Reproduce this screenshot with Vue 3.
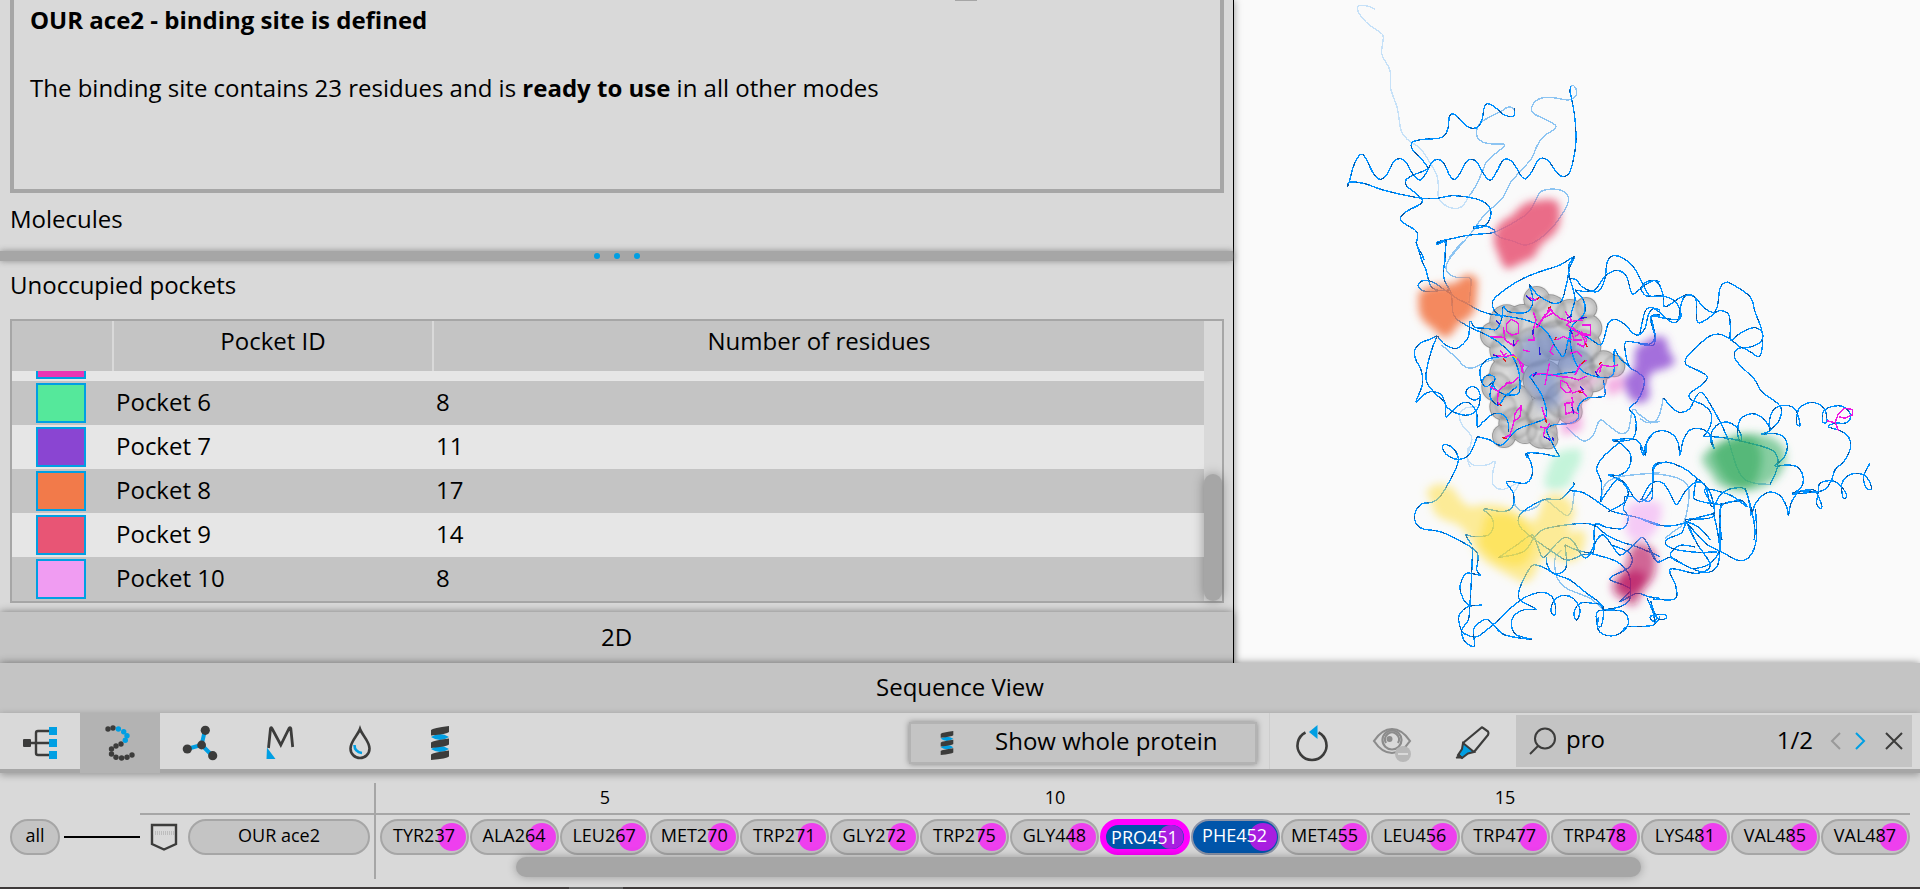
<script setup>
import { ref } from 'vue'

const pockets = [
  { name: 'Pocket 6', residues: 8, tone: 'mint' },
  { name: 'Pocket 7', residues: 11, tone: 'violet' },
  { name: 'Pocket 8', residues: 17, tone: 'orange' },
  { name: 'Pocket 9', residues: 14, tone: 'rose' },
  { name: 'Pocket 10', residues: 8, tone: 'lilac' },
]

const residues = [
  'TYR237', 'ALA264', 'LEU267', 'MET270', 'TRP271', 'GLY272', 'TRP275', 'GLY448', 'PRO451',
  'PHE452', 'MET455', 'LEU456', 'TRP477', 'TRP478', 'LYS481', 'VAL485', 'VAL487',
]
const ticks = residues.map((_, i) => ((i + 3) % 5 === 0 ? i + 3 : ''))
const query = ref('pro')

// Smooth curve through a list of "x,y" points
function curve(text) {
  const p = text.trim().split(/\s+/).map((s) => s.split(',').map(Number))
  let d = `M${p[0][0]} ${p[0][1]}`
  for (let i = 0; i < p.length - 1; i++) {
    const a = p[i - 1] || p[i]
    const b = p[i]
    const c = p[i + 1]
    const e = p[i + 2] || c
    const n = [
      b[0] + (c[0] - a[0]) / 6, b[1] + (c[1] - a[1]) / 6,
      c[0] - (e[0] - b[0]) / 6, c[1] - (e[1] - b[1]) / 6, c[0], c[1],
    ].map((v) => v.toFixed(1))
    d += `C${n.join(' ')}`
  }
  return d
}

const third = (x, y) => `translate(${x} ${y}) scale(.33333)`
const wide = 'translate(1230 0) scale(.4405 .4279)'

const backbone = [
  {
    frame: third(1320, 0),
    far: [
      '166,28 150,20 125,16 113,22 118,42 140,68 170,90 187,103 190,115 185,150 188,170 210,212 212,265 232,325 243,390 262,418 300,445 325,480 350,525 355,560 355,590 370,612 400,625 425,620 445,592',
    ],
    mid: [
      '445,592 465,562 485,520 500,485 525,462 553,438 548,432 520,432 490,427 472,412 470,390 480,370 510,350 545,333 560,323 575,322 583,330',
      '752,258 762,258 770,275 765,290 745,300 690,292 655,298 636,320 640,340 680,360 707,377 700,390 670,410 650,440 635,475 600,515 570,550 550,590 515,625 485,655 460,690 440,715 410,745 387,775',
      '523,697 550,685 590,662 625,638 645,605 660,577 685,568 720,570 742,585 745,605 725,645 690,690 650,722 615,735 575,722 540,712 523,697',
    ],
    near: [
      '583,325 584,343 572,350 550,343 535,330 515,315 500,312 492,325 487,355 475,380 458,385 440,378 420,358 400,342 388,350 385,380 375,405 355,415 310,418 280,425 273,437 280,452 305,478 322,500 318,510 280,525 258,540 260,558 290,582 307,600 300,613 262,633 242,652 248,667 285,690 293,705 290,735 305,762 313,780',
      '83,560 88,545 100,500 115,470 127,463 140,480 160,520 180,538 200,525 220,487 240,476 260,490 280,525 300,540 318,520 335,488 353,478 372,490 390,528 404,538 420,520 440,484 456,478 472,488 495,528 513,540 530,515 548,482 566,478 584,495 605,530 618,536 635,515 655,480 672,475 690,488 710,518 730,530 748,518 760,480 768,420 764,350 755,297 750,275 752,258',
      '83,560 88,547 130,550 200,573 300,594 350,595 400,587 470,597 500,612 512,630 510,655 495,677 465,685 462,680 485,677 505,680 523,697 450,705 400,715 355,725 353,733 375,722 378,730 373,780',
    ],
  },
  {
    frame: third(1390, 240),
    far: ['262,500 225,505 208,530 220,560 245,590 240,620 232,655 240,680'],
    mid: [
      '225,0 180,55 168,80 175,100 200,112 235,113 243,125 237,190',
      '530,560 560,590 585,603 610,585 630,540 660,560 690,580 715,570 728,510 750,525 780,545 810,545',
      '155,315 195,350 225,380 250,383 290,365 335,350',
    ],
    near: [
      '77,5 82,15 95,60 108,90 117,125 125,142 150,152 180,150',
      '180,150 150,152 110,155 88,145 87,130 105,121 130,127 160,147 180,160 200,175 230,190 265,210 300,222 345,228 400,238 435,250 470,275 490,310 515,348 525,340 535,300 550,270 590,290 620,310 635,313 645,285 655,250 675,238 700,250 730,280 745,285 765,265 775,225 790,205 810,210',
      '140,10 165,5 165,60 160,95 165,125 182,155 186,180 188,215 200,237 240,262 290,285 330,310 365,345 385,390 390,430 385,460 355,465 325,455 310,435 315,415 300,405 283,412 278,430 290,440 310,425',
      '142,287 120,298 90,310 73,335 78,360 95,395 97,435 78,485 100,465 125,455 155,465 170,500 200,520 235,525 260,510 270,480 268,455 250,440 232,447 230,465 250,480 268,475',
      '142,287 125,330 108,400 112,430 135,460 165,490 168,530 185,515 215,490 240,490 260,520 262,560 280,545 310,522 340,525 355,550 355,575',
      '142,287 160,310 190,325 210,320 235,290 240,245 255,262 290,265 320,268 335,235 340,200 355,215 405,218 425,200 428,170 418,135 430,150 450,170 490,190 515,182 530,130 540,80 553,50 510,75 450,95 400,115 350,145 310,180 312,210 335,230',
      '553,50 537,75 538,110 550,150 555,180 545,215 540,250',
      '538,115 560,120 575,140 610,155 630,150 645,115 652,65 670,47 700,55 730,80 750,115 765,145 780,168 810,170',
      '555,150 590,155 615,150 640,115 665,95 690,93 710,110 725,160 740,155 765,135 790,122 810,125',
      '555,150 580,180 585,215 570,235 545,260 540,300 555,365 580,395 620,410 655,412 672,395 673,330 690,355 718,380',
      '810,225 785,228 790,260 795,290 780,312 740,308 708,305 705,330 718,380 740,395 762,415 758,450 740,485 718,505 735,530 738,570 725,598 670,605',
      '640,420 645,465 620,472 590,475 565,500 565,535 540,550 490,555 470,570 480,595 500,635 505,650 450,640 410,640 412,655',
      '262,590 300,600 335,615 380,570 430,550 465,535 468,505 455,465 430,425 420,410 440,400 480,405 520,400 560,395',
      '275,430 270,390 290,360 330,350 350,352',
      '310,425 300,470 325,495 345,470 380,440',
    ],
  },
  {
    frame: third(1640, 240),
    far: [],
    mid: [
      '5,700 60,703 115,715 145,740 145,790 130,850 100,875 75,895',
      '0,535 20,547 45,545 60,520 70,473',
      '265,600 290,680 310,715 345,730 390,733',
    ],
    near: [
      '0,145 20,125 45,122 60,138 70,170 73,200 95,190 125,170 150,163 170,178 195,205 220,217 232,200 240,145 255,128 275,132 330,170 345,215 365,270 368,310 358,350 330,335 305,323 285,335 287,360 320,395 345,420 365,455 410,488 425,510 415,545 390,570',
      '0,145 20,168 65,168 100,180 120,210 118,238 75,235 35,228 33,245 45,290 40,315 15,315 0,312',
      '0,280 15,215 35,203 60,218 95,247 115,240 120,210 130,175 150,165 168,180 172,245 200,238 235,213 265,222 271,260 272,300 300,280 340,263 365,275 366,300 340,318 305,323 272,298 240,283 210,288 170,320 138,355 140,375 175,392 202,410 185,435 150,460 152,478 190,495 213,520 210,560 190,590',
      '70,473 95,502 120,517 150,505 165,475 185,457 215,500 245,555 265,600',
      '390,733 410,690 413,655 395,630 340,612 265,595 215,590 192,590',
      '0,620 10,645 15,620 35,583 68,572 100,585 115,610 120,645 130,600 150,570 180,566 205,578 215,600 222,625 212,600 218,570 240,550 265,547 290,562 305,590 300,603 293,580 300,540 330,522 360,528 385,555 390,572 365,583 400,580 430,590 442,620 430,655 405,678 440,675 470,680 488,705 485,740 455,763',
      '390,572 388,545 400,510 425,497 455,500 472,520 480,555 470,550 475,510 500,490 530,490 555,510 560,545 548,545 550,515 575,500 610,500 632,525 620,548 585,550 565,560 600,572 625,590 632,620 615,660 585,690 575,720 555,748 530,755 455,763',
      '455,760 500,750 525,752 545,795 540,805 530,790 535,755 540,730 575,722 600,735 620,765 610,775 605,735 620,710 650,700 680,712 695,745 680,745 670,710 690,670',
      '0,778 35,778 40,690 60,670 90,668 140,690 170,715 190,730 215,770 218,830 145,838 140,848 165,900',
      '5,778 25,740 45,725 70,730 90,760 110,793 135,755 165,728 195,735 215,800 245,760 280,745 315,748 330,800 333,825 350,785 385,757 420,767 440,800 445,825 455,785 480,755 530,755',
      '170,715 162,760 170,780 240,793 300,780 320,800 270,765 195,748 215,790',
      '246,900 238,840 243,800 270,785 310,785',
      '315,745 335,810 345,870 342,900',
      '0,835 50,855 100,857 145,848 180,865 212,900',
    ],
  },
  {
    frame: third(1390, 430),
    far: ['235,50 233,85 250,105 290,105 315,95 308,130 310,165 340,178 385,160 370,190'],
    mid: [
      '370,190 375,225 400,243 440,230 462,208 500,235 530,257 545,240 553,185',
      '515,360 495,385 500,440 530,475 600,505 640,540',
      '632,215 645,165 690,140 810,128',
    ],
    near: [
      '262,20 240,70 210,88 175,78 158,55 165,43 190,55 205,85 200,110 175,160 150,200 125,217 95,222 75,250 78,280 100,297 150,305 215,335 262,370 260,420 270,435 230,430 212,460 213,490 235,525 275,525 235,530 208,555 210,590 225,612 260,620 290,600 320,575 350,545 400,505 450,487 480,495 495,520 495,555 483,545 490,515 515,497 550,505 570,540 560,570 552,550 570,520 610,520 640,530 635,585 622,585 622,545 660,540',
      '248,350 245,430 240,520 235,570 215,600 225,635 253,648 250,600 265,580 290,568 310,585 345,615 425,628 380,615 365,590 370,560 400,540 438,537 390,510 388,480 410,430 430,405 460,412 500,435 540,450 590,490 625,515 640,540',
      '410,70 425,105 425,140 405,160 350,155 370,190 368,230 340,245 282,237 305,262 310,290 295,315 250,320 228,315 245,345',
      '550,155 552,165 540,180 510,208 465,208 420,230 388,258 390,290 430,325 480,360 530,390 575,375 610,365 615,285 650,292 700,295 715,260 700,235 715,190 700,160 680,150 655,180 632,215',
      '540,182 580,188 630,220 670,245 740,262 810,285',
      '325,383 380,345 425,315 440,340 460,382 500,340 525,322 550,335 575,375 595,380 620,330 640,315 665,345 690,375 720,355 755,323 775,345 800,395 810,393',
      '325,383 400,365 435,320 470,295 580,280 620,290 650,315 700,338 740,350 810,380',
      '525,345 530,400 520,425 490,430 470,400 470,380',
      '525,345 560,360 620,375 680,395 715,430 722,470 718,510 690,530 640,540',
      '632,215 635,160 620,115 640,80 685,38 670,30 740,30 765,75 770,40 790,10 810,2',
      '685,35 720,70 718,110 690,135 655,135 700,155 745,215 785,180 790,110 810,98',
      '655,245 700,220 705,200 730,200',
      '665,345 720,370 720,410 660,445 700,465 722,480 690,515 740,490 775,500 810,505',
      '640,540 700,545 715,580 690,610 655,617 625,600 625,560',
      '690,612 710,590 740,590 790,585 810,560',
    ],
  },
  {
    frame: wide,
    far: [],
    mid: [],
    near: [
      '1193,1190 1195,1260 1180,1300 1155,1310 1120,1292 1080,1270 1040,1225',
      '1115,1175 1112,1230 1112,1290 1105,1325 1080,1338 1040,1325 1000,1303 970,1313 950,1280',
      '1098,1200 1040,1218 1025,1245 990,1262 1000,1280 1050,1290 1105,1290',
      '1040,1225 1060,1270 1090,1320 1060,1340 1000,1330 1012,1370 1010,1400 960,1400',
      '1055,1278 1020,1275 1000,1300 1040,1325',
      '955,1405 970,1445 990,1445 985,1436 955,1440 960,1452 970,1445',
      '947,1398 960,1430 965,1455',
      '1098,1200 1108,1250 1110,1290 1085,1320 1050,1330',
    ],
  },
]

const surface = [
  [440, 178, 38], [480, 215, 50], [350, 245, 50], [310, 285, 38], [400, 250, 56], [540, 225, 46],
  [588, 205, 32], [595, 265, 40], [580, 320, 52], [640, 375, 42], [672, 378, 32], [610, 415, 40],
  [560, 385, 56], [500, 300, 60], [430, 320, 60], [350, 330, 50], [350, 400, 50], [320, 440, 44],
  [370, 490, 58], [340, 500, 40], [342, 588, 34], [375, 550, 48], [405, 572, 38], [455, 578, 46],
  [475, 598, 28], [460, 520, 52], [520, 480, 56], [540, 515, 36], [460, 420, 60], [575, 450, 34],
]

const sticks = [
  '410,170 435,180 450,172', '430,215 438,240 430,268 432,300 415,300', '470,215 480,205 490,218 460,235 440,265',
  '480,210 510,235 540,245 575,240 570,232', '525,215 545,240 530,255 560,275 600,285', '350,250 365,238 385,250 385,280 365,285 350,275 350,250',
  '340,260 345,300 372,318 385,300', '300,290 345,292', '575,255 602,255 602,285 575,285', '555,290 575,275 590,300 580,320 560,310',
  '500,300 520,290 545,300', '330,330 345,350 370,345 385,360 400,375 395,395', '310,345 340,350 350,340',
  '555,405 570,375 590,360', '575,350 560,335 540,340', '620,395 635,375 665,380 685,375', '635,375 628,400', '465,435 478,370',
  '425,405 460,400 510,410 540,412 565,420 590,408', '512,420 530,430 545,455 528,458 512,440 512,420', '545,460 575,450 590,470',
  '525,490 545,488 550,515 528,522 525,490', '545,470 550,490', '550,515 565,522', '345,430 370,428 385,410', '300,440 325,455 340,440 360,425',
  '325,455 322,485 335,497', '395,495 375,520 372,545 390,530 395,495', '372,545 360,585 340,595', '450,560 470,565 480,550', '465,565 460,590 480,598', '455,500 468,540', '490,315 480,335 490,345', '400,330 420,335',
  '440,262 465,225 484,208', '548,262 575,285 588,312', '545,275 552,300 575,300', '388,365 400,400',
]
const nitrogens = ['408,165 425,182', '430,268 428,285', '540,270 548,282', '310,345 325,350', '462,590 480,600', '372,318 370,300', '615,395 625,408', '570,235 592,232', '430,410 440,395', '322,485 322,497', '318,242 330,255', '545,500 552,520', '570,440 580,450', '488,590 490,603', '530,235 545,228', '448,320 450,345']
const oxygens = ['475,205 482,200', '325,492 335,497', '337,592 350,597', '575,372 585,360', '495,300 500,290', '340,355 348,365', '565,455 580,458', '628,375 634,365', '465,535 470,548', '585,310 592,320', '440,178 448,172']
</script>

<template>
  <div class="app">
    <main class="workspace">
      <section class="panel">
        <article class="info">
          <span class="knob"></span>
          <h1>OUR ace2 - binding site is defined</h1>
          <p>The binding site contains 23 residues and is <b>ready to use</b> in all other modes</p>
        </article>
        <h2 class="molecules">Molecules</h2>
        <div class="splitter"><i></i><i></i><i></i></div>
        <h2 class="unoccupied">Unoccupied pockets</h2>
        <div class="table-frame">
          <table>
            <colgroup><col class="c-color" /><col class="c-id" /><col /></colgroup>
            <thead>
              <tr><th></th><th>Pocket ID</th><th>Number of residues</th></tr>
            </thead>
            <tbody>
              <tr class="cut"><td><span class="swatch magenta"></span></td><td></td><td></td></tr>
              <tr v-for="p in pockets" :key="p.name">
                <td><span class="swatch" :class="p.tone"></span></td>
                <td>{{ p.name }}</td>
                <td>{{ p.residues }}</td>
              </tr>
            </tbody>
          </table>
          <div class="v-track"><div class="v-thumb"></div></div>
        </div>
        <button class="bar flat">2D</button>
      </section>

      <section class="scene">
        <svg viewBox="1234 0 686 663" preserveAspectRatio="xMinYMin meet" aria-hidden="true">
          <defs>
            <filter id="soft" x="-20%" y="-20%" width="140%" height="140%"><feGaussianBlur stdDeviation="10" /></filter>
            <filter id="haze" x="-30%" y="-30%" width="160%" height="160%"><feGaussianBlur stdDeviation="16" /></filter>
            <filter id="melt" x="-10%" y="-10%" width="120%" height="120%"><feGaussianBlur stdDeviation="3" /></filter>
            <radialGradient id="ball">
              <stop offset="0" stop-color="#fff" stop-opacity=".16" />
              <stop offset=".6" stop-color="#999" stop-opacity=".1" />
              <stop offset="1" stop-color="#4c4c4c" stop-opacity=".3" />
            </radialGradient>
          </defs>

          <g :transform="third(1390, 240)">
            <circle v-for="(s, i) in surface" :key="'e' + i" :cx="s[0]" :cy="s[1]" :r="s[2] + 2" fill="#a0a0a0" />
            <circle v-for="(s, i) in surface" :key="'u' + i" :cx="s[0]" :cy="s[1]" :r="s[2] - 1" fill="#d6d6d6" />
            <g filter="url(#melt)">
              <circle v-for="(s, i) in surface" :key="i" :cx="s[0]" :cy="s[1]" :r="s[2]" fill="url(#ball)" />
            </g>
            <path d="M400 290L480 270 530 300 590 320 590 400 500 400 520 490 460 510 420 450 380 360Z" fill="#6480c8" fill-opacity=".55" filter="url(#haze)" />
            <path d="M520 420L590 410 640 400 600 450 570 530 520 510Z" fill="#f0a0d8" fill-opacity=".45" filter="url(#soft)" />
          </g>

          <g v-for="(g, i) in backbone" :key="i" :transform="g.frame" class="trace">
            <path v-for="(c, k) in g.far" :key="'f' + k" :d="curve(c)" class="far" />
            <path v-for="(c, k) in g.mid" :key="'m' + k" :d="curve(c)" class="mid" />
            <template v-for="(c, k) in g.near" :key="'n' + k">
              <path :d="curve(c)" class="near" />
              <path :d="curve(c)" class="shade" />
            </template>
          </g>

          <g :transform="third(1390, 240)" class="sticks">
            <polyline v-for="(s, i) in sticks" :key="i" :points="s" />
            <polyline v-for="(s, i) in nitrogens" :key="'b' + i" :points="s" class="nitrogen" />
            <polyline v-for="(s, i) in oxygens" :key="'o' + i" :points="s" class="oxygen" />
            <polyline points="368,348 382,356" class="sulfur" />
          </g>
          <g :transform="third(1640, 240)" class="sticks">
            <polyline points="560,542 585,548 595,522 612,505 637,508 638,524 615,535 597,530" />
            <polyline points="585,548 596,572" />
          </g>

          <g :transform="wide" filter="url(#soft)">
            <path d="M600 548Q605 520 640 505Q670 465 695 470Q750 455 748 490Q755 530 730 552Q700 570 692 600Q660 615 630 630Q615 620 608 590Q596 570 600 548Z" fill="#e85575" fill-opacity=".86" />
            <path d="M428 685Q450 665 480 665Q515 665 525 650Q540 632 562 652Q560 700 556 725Q540 750 520 755Q505 785 488 790Q470 780 458 765Q430 750 428 720Z" fill="#f27a4a" fill-opacity=".88" />
            <path d="M918 830Q920 805 945 800Q960 780 990 790Q992 820 1012 845Q1000 862 962 868Q945 880 950 905Q960 930 940 940Q915 945 908 930Q890 905 895 880Q925 870 918 830Z" fill="#8a45d2" fill-opacity=".76" />
            <path d="M852 890L890 875 892 912 860 926ZM750 985L800 968 798 1005 755 1018Z" fill="#f07ad2" fill-opacity=".6" />
            <path d="M735 1065Q760 1045 798 1050Q800 1090 780 1105Q775 1145 740 1145Q712 1150 714 1120Q722 1090 735 1065Z" fill="#55e89b" fill-opacity=".33" />
            <path d="M1070 1070Q1090 1040 1130 1025Q1170 1005 1215 1018Q1255 1030 1262 1060Q1262 1110 1220 1132Q1190 1150 1150 1146Q1100 1140 1095 1110Q1075 1090 1070 1070Z" fill="#3db068" fill-opacity=".6" />
            <path d="M1095 1060Q1110 1030 1150 1022Q1190 1010 1200 1040Q1215 1070 1200 1110Q1190 1150 1150 1140Q1110 1120 1095 1060Z" fill="#34aa5e" fill-opacity=".6" />
            <path d="M445 1150Q470 1115 510 1145Q520 1170 545 1185Q590 1170 640 1190Q670 1210 690 1220Q705 1200 710 1165Q740 1145 765 1165Q790 1190 780 1210Q760 1240 775 1245Q800 1230 808 1250Q805 1290 790 1305Q770 1320 745 1308Q715 1285 700 1320Q690 1360 665 1362Q640 1350 590 1320Q560 1300 550 1270Q530 1225 500 1220Q455 1205 460 1180Z" fill="#fde25a" fill-opacity=".62" />
            <path d="M580 1205Q620 1190 655 1210Q700 1250 685 1290Q670 1335 630 1320Q590 1310 565 1270Z" fill="#fde03c" fill-opacity=".6" />
            <path d="M903 1180Q940 1165 978 1175Q985 1210 970 1230Q960 1265 925 1262Q895 1260 898 1225Z" fill="#f09cf2" fill-opacity=".5" />
            <path d="M905 1295Q915 1265 935 1268Q970 1280 966 1310Q970 1350 945 1370Q930 1390 925 1410Q905 1425 895 1400Q865 1395 868 1365Q880 1340 895 1335Z" fill="#b8105c" fill-opacity=".64" />
            <path d="M885 1350Q920 1320 945 1345Q945 1380 905 1390Q880 1385 885 1350Z" fill="#b8105c" fill-opacity=".6" />
          </g>
        </svg>
      </section>
    </main>

    <section class="sequence">
      <header class="bar heading">Sequence View</header>
      <div class="toolbar">
        <button class="tool" aria-label="Hierarchy">
          <svg viewBox="0 0 80 56"><g fill="none" stroke="#3c3c3b" stroke-width="2.400"><path d="M30 30H49M49 18H38Q36 18 36 20V40Q36 42 38 42H49" /></g><rect x="23" y="26" width="8" height="8" rx="1" fill="#3c3c3b" /><path d="M49 14h8v8h-8zM49 26h8v8h-8zM49 38h8v8h-8z" fill="#009fe3" /></svg>
        </button>
        <button class="tool active" aria-label="Sequence" aria-pressed="true">
          <svg viewBox="0 0 80 56"><g fill="#3c3c3b"><circle cx="28" cy="16" r="2.7" /><circle cx="33" cy="15" r="2.7" /><circle cx="41" cy="31" r="2.7" /><circle cx="36" cy="33" r="2.7" /><circle cx="31.500" cy="36" r="2.7" /><circle cx="31.500" cy="41" r="2.7" /><circle cx="36" cy="44.300" r="2.7" /><circle cx="41.600" cy="45" r="2.7" /><circle cx="47" cy="44.300" r="2.7" /><circle cx="52" cy="42" r="2.7" /></g><g fill="#009fe3"><circle cx="38.400" cy="16" r="2.7" /><circle cx="43.700" cy="18.700" r="2.7" /><circle cx="47" cy="22.700" r="2.7" /><circle cx="45.300" cy="27.300" r="2.7" /></g></svg>
        </button>
        <button class="tool" aria-label="Atoms">
          <svg viewBox="0 0 80 56"><path d="M45 17L41.600 32 27 36M41.600 32L52.700 43" fill="none" stroke="#009fe3" stroke-width="4" /><g fill="#3c3c3b"><circle cx="41.600" cy="32" r="4.400" /><circle cx="45.300" cy="17.300" r="4.600" /><circle cx="27.300" cy="36" r="4.600" /><circle cx="52.700" cy="42.700" r="4.600" /></g></svg>
        </button>
        <button class="tool" aria-label="Movement">
          <svg viewBox="0 0 80 56"><path d="M28.500 35L30.500 15.500Q31 14 32 15.500L40.800 32 49 15.500Q50.300 14 50.800 15.500L52.700 34" fill="none" stroke="#3c3c3b" stroke-width="2.800" /><path d="M27 34.500Q31 40 35.500 46H26.500Z" fill="#009fe3" /></svg>
        </button>
        <button class="tool" aria-label="Solvent">
          <svg viewBox="0 0 80 56"><path d="M40 16C38 22 30.500 28 30.500 35.500A9.500 9.500 0 0 0 49.500 35.500C49.500 28 42 22 40 16Z" fill="none" stroke="#3c3c3b" stroke-width="2.600" /><path d="M34.500 32Q34.500 39 42 40" fill="none" stroke="#009fe3" stroke-width="2.600" /></svg>
        </button>
        <button class="tool" aria-label="Secondary structure">
          <svg viewBox="0 0 80 56"><path d="M31 24Q40 18 49 24 40 30 31 24ZM31 36Q40 30 49 36 40 42 31 36Z" fill="#009fe3" /><path d="M31 17Q33 15 49 13V19Q47 21 31 22.500ZM31 29.500Q33 27.500 49 25.500V31.500Q47 33.500 31 35ZM31 41.500Q33 39.500 49 37.500V43.500Q47 45.500 31 47Z" fill="#3c3c3b" /></svg>
        </button>

        <button class="whole">
          <svg viewBox="26 10 28 40"><path d="M31 24Q40 18 49 24 40 30 31 24ZM31 36Q40 30 49 36 40 42 31 36Z" fill="#009fe3" /><path d="M31 17Q33 15 49 13V19Q47 21 31 22.500ZM31 29.500Q33 27.500 49 25.500V31.500Q47 33.500 31 35ZM31 41.500Q33 39.500 49 37.500V43.500Q47 45.500 31 47Z" fill="#3c3c3b" /></svg>
          <span>Show whole protein</span>
        </button>
        <div class="actions">
          <button class="tool" aria-label="Reset">
            <svg viewBox="0 0 80 56"><path d="M33.500 19.500A14.500 14.500 0 1 0 46.500 19.500" fill="none" stroke="#3c3c3b" stroke-width="2.600" /><path d="M37 19L45.500 12V26Z" fill="#009fe3" /></svg>
          </button>
          <button class="tool" aria-label="Hide" disabled>
            <svg viewBox="0 0 80 56"><g fill="none" stroke="#8c8c8c" stroke-width="2.200"><path d="M22 28Q30 16 40 16T58 28Q50 40 40 40T22 28Z" /><circle cx="40" cy="27" r="9.500" /><path d="M34 30A7 7 0 1 1 46 30" /></g><circle cx="37.500" cy="26" r="3" fill="#8c8c8c" /><circle cx="51" cy="41" r="8" fill="#b8b8b8" /><path d="M46 41H56" stroke="#d9d9d9" stroke-width="2" /></svg>
          </button>
          <button class="tool" aria-label="Highlight">
            <svg viewBox="0 0 80 56"><path d="M31 30L49 15Q50 14 51 15L56 18.500Q57 20 56 22L42 39" fill="none" stroke="#3c3c3b" stroke-width="2.200" /><path d="M31 30L42 39 36 40.500 30 45 26 42 30 36Z" fill="#009fe3" stroke="#3c3c3b" stroke-width="2" /><path d="M24 45L27 41 31 45Z" fill="#3c3c3b" stroke="#3c3c3b" /></svg>
          </button>
        </div>
        <div class="search">
          <svg class="lens" viewBox="0 0 30 30"><circle cx="17" cy="12.500" r="10" /><path d="M10 20L2 28" /></svg>
          <input v-model="query" aria-label="Search residues" />
          <output>1/2</output>
          <button class="step off" aria-label="Previous match" disabled><svg viewBox="0 0 12 20"><path d="M10 2L2 10 10 18" /></svg></button>
          <button class="step" aria-label="Next match"><svg viewBox="0 0 12 20"><path d="M2 2L10 10 2 18" /></svg></button>
          <button class="clear" aria-label="Clear search"><svg viewBox="0 0 20 20"><path d="M2 2L18 18M18 2L2 18" /></svg></button>
        </div>
      </div>

      <div class="track">
        <div class="chain">
          <button class="pill all">all</button>
          <span class="link"></span>
          <svg class="shield" viewBox="0 0 28 30"><path d="M2 3H26V22L14 27.500 2 22Z" /><path d="M3 11H25" class="fringe" /></svg>
          <button class="pill name">OUR ace2</button>
        </div>
        <div class="residues">
          <div class="ticks"><span v-for="(t, i) in ticks" :key="i">{{ t }}</span></div>
          <div class="pills">
            <button v-for="(r, i) in residues" :key="r" class="pill residue" :class="{ match: i === 8, picked: i === 8 || i === 9 }">
              <i></i><span>{{ r }}</span>
            </button>
          </div>
          <div class="h-thumb"></div>
        </div>
      </div>
      <footer class="edge"><span></span></footer>
    </section>
  </div>
</template>

<style>
body {
  background: #d9d9d9;
}
</style>

<style scoped>
.app,
.app * {
  box-sizing: border-box;
}
.app {
  display: flex;
  flex-direction: column;
  min-height: 100vh;
  background: #d9d9d9;
  color: #000;
  font: 24px/32px "Open Sans", "Noto Sans", sans-serif;
  overflow: hidden;
}
button,
input {
  margin: 0;
  padding: 0;
  border: 0;
  background: none;
  color: inherit;
  font: inherit;
}
svg {
  display: block;
}
.workspace {
  flex: 1;
  display: grid;
  grid-template-columns: 1234fr 686fr;
}
.panel {
  position: relative;
  z-index: 1;
  display: flex;
  flex-direction: column;
  min-width: 0;
  border-right: 1px solid #000;
  background: #d9d9d9;
  box-shadow: 0 0 8px rgba(0, 0, 0, 0.4);
}
.info {
  position: relative;
  flex: 1;
  margin: 0 9px 0 10px;
  padding: 4px 16px;
  border: 4px solid #a6a6a6;
  border-top: 0;
}
.knob {
  position: absolute;
  top: 0;
  left: 78%;
  width: 22px;
  height: 1px;
  background: #a6a6a6;
}
h1,
h2,
p {
  margin: 0;
  font-size: 24px;
  line-height: 32px;
}
p {
  margin-top: 36px;
  font-weight: 400;
}
h2 {
  padding-left: 10px;
  font-weight: 400;
}
.molecules {
  margin: 10px 0 16px;
}
.splitter {
  display: flex;
  flex: none;
  align-items: center;
  justify-content: center;
  gap: 14px;
  height: 10px;
  background: #a6a6a6;
  box-shadow: 0 0 6px #8c8c8c;
}
.splitter i {
  width: 6px;
  height: 6px;
  border-radius: 50%;
  background: #009fe3;
}
.unoccupied {
  margin: 8px 0 18px;
}
.table-frame {
  display: flex;
  margin: 0 9px 9px 10px;
  border: 2px solid #a6a6a6;
}
table {
  flex: 1;
  border-collapse: collapse;
  table-layout: fixed;
}
.c-color {
  width: 101px;
}
.c-id {
  width: 320px;
}
th {
  height: 50px;
  padding: 0 0 10px;
  background: #c4c4c4;
  font-weight: 400;
}
th + th {
  border-left: 2px solid #d9d9d9;
}
td {
  height: 44px;
  padding: 0 3px 2px;
  background: #c4c4c4;
}
tr:nth-child(odd) td {
  background: #e6e6e6;
}
.cut td {
  height: 10px;
}
td:first-child {
  padding: 0 0 0 24px;
}
.swatch {
  display: block;
  width: 50px;
  height: 40px;
  border: 2px solid #009fe3;
}
.cut .swatch {
  height: 8px;
  margin-bottom: 2px;
  border-top: 0;
}
.magenta { background: #ea35b4; }
.mint { background: #55e89b; }
.violet { background: #8a45d2; }
.orange { background: #f27a4a; }
.rose { background: #e85575; }
.lilac { background: #f09cf2; }
.v-track {
  display: flex;
  flex-direction: column;
  justify-content: flex-end;
  width: 18px;
}
.v-thumb {
  height: 127px;
  border-radius: 9px;
  background: #a6a6a6;
  box-shadow: 0 0 12px rgba(0, 0, 0, 0.35);
}
.bar {
  display: block;
  position: relative;
  width: 100%;
  height: 51px;
  flex: none;
  padding-bottom: 2px;
  background: #c4c4c4;
  text-align: center;
  box-shadow: 0 0 8px rgba(0, 0, 0, 0.45);
}
.scene {
  min-width: 0;
  background: #fafafa;
}
.scene svg {
  width: 100%;
}
.trace,
.sticks {
  fill: none;
  shape-rendering: crispEdges;
}
.trace path,
.sticks polyline {
  vector-effect: non-scaling-stroke;
  stroke-width: 1.4;
}
.far { stroke: #c6e1f8; }
.mid { stroke: #8cc4f2; }
.near { stroke: #0090ff; }
.trace .shade {
  stroke: #0757a4;
  stroke-width: 1;
  stroke-dasharray: 3 9 2 6 5 13 2 8;
}
.sticks {
  stroke: #ee18e2;
}
.nitrogen { stroke: #2a20d8; }
.oxygen { stroke: #dc2020; }
.sulfur { stroke: #e8d000; }
.sequence {
  position: relative;
  z-index: 2;
}
.heading {
  height: 50px;
  line-height: 48px;
}
.toolbar {
  position: relative;
  display: flex;
  height: 60px;
  border-bottom: 4px solid #a6a6a6;
  background: #d9d9d9;
  box-shadow: 0 2px 7px rgba(0, 0, 0, 0.3);
}
.tool {
  width: 80px;
  height: 56px;
}
.tool svg {
  width: 80px;
  height: 56px;
}
.active {
  height: 60px;
  padding-bottom: 4px;
  background: #b3b3b3;
}
.whole {
  display: flex;
  align-items: center;
  width: 348px;
  height: 42px;
  margin: 9px 12px 0 auto;
  padding-left: 26px;
  border: 2px solid #b3b3b3;
  background: #c4c4c4;
  box-shadow: 0 0 6px rgba(0, 0, 0, 0.4);
}
.whole svg {
  width: 20px;
  height: 28px;
}
.whole span {
  padding: 0 0 4px 38px;
}
.actions {
  display: flex;
  height: 56px;
  padding-left: 2px;
  border-left: 1px solid #cdcdcd;
}
.search {
  display: flex;
  align-items: center;
  width: 396px;
  height: 52px;
  margin: 2px 8px 0 4px;
  padding: 0 8px 0 12px;
  background: #c4c4c4;
}
.search svg {
  fill: none;
  stroke: #3c3c3b;
  stroke-width: 2;
}
.lens {
  width: 30px;
  height: 30px;
}
.search input {
  flex: 1;
  min-width: 0;
  height: 40px;
  margin: 0 8px 6px;
  outline: 0;
}
.search output {
  margin: 0 17px 2px 0;
}
.step svg {
  width: 12px;
  height: 20px;
  stroke: #009fe3;
}
.step.off {
  margin-right: 12px;
}
.step.off svg {
  stroke: #999;
}
.clear {
  margin-left: 18px;
}
.clear svg {
  width: 20px;
  height: 20px;
}
.track {
  display: flex;
  height: 114px;
  padding: 10px 10px 0;
  font-size: 18px;
  line-height: 24px;
}
.chain {
  display: flex;
  align-items: center;
  width: 366px;
  height: 96px;
  padding: 12px 4px 0 0;
  border-right: 2px solid #a6a6a6;
}
.pill {
  position: relative;
  height: 36px;
  padding: 0 0 4px;
  border: 2px solid #a6a6a6;
  border-radius: 18px;
  background: #c4c4c4;
}
.all {
  width: 50px;
}
.link {
  width: 76px;
  height: 2px;
  margin-left: 4px;
  background: #000;
}
.shield {
  width: 28px;
  height: 30px;
  margin: 0 10px;
  fill: none;
  stroke: #3c3c3b;
  stroke-width: 2.4;
}
.fringe {
  stroke: #bdbdbd;
  stroke-width: 4;
  stroke-dasharray: 1 1;
}
.name {
  flex: 1;
}
.residues {
  flex: 1;
  min-width: 0;
}
.ticks,
.pills {
  display: grid;
  grid-template-columns: repeat(17, 1fr);
  padding-left: 4px;
}
.ticks {
  height: 32px;
  margin-left: -236px;
  padding: 2px 0 0 240px;
  border-bottom: 2px solid #a6a6a6;
  text-align: center;
}
.pills {
  gap: 1px;
  padding-top: 4px;
}
.residue i {
  position: absolute;
  top: 2px;
  right: 1px;
  width: 28px;
  height: 28px;
  border-radius: 50%;
  background: #ee3fee;
}
.residue span {
  position: relative;
  margin-right: 1px;
}
.picked {
  border-color: #8a93a8;
  background: #0055aa;
  color: #fff;
}
.picked i {
  background: #a81ee0;
}
.match {
  border: 6px solid #f0f;
}
.match i {
  top: -2px;
  right: -3px;
  clip-path: inset(2px 3px 2px 0 round 12px);
}
.h-thumb {
  position: relative;
  width: 1125px;
  max-width: 74%;
  height: 20px;
  margin: 2px 0 0 140px;
  border-radius: 10px;
  background: #a6a6a6;
  box-shadow: 0 0 10px rgba(0, 0, 0, 0.3);
}
.edge {
  height: 2px;
  background: #3e3a3a;
}
.edge span {
  display: block;
  width: 54px;
  height: 2px;
  margin-left: 569px;
  background: #666;
}
</style>
